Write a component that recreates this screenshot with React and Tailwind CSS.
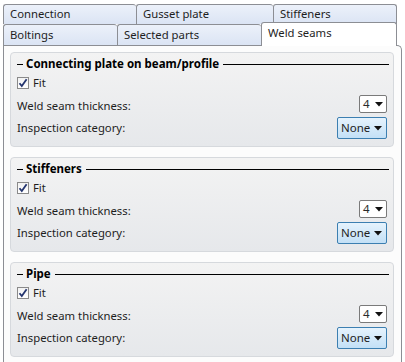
import React from "react";

const font = { fontFamily: "'Noto Sans', 'Open Sans', sans-serif" };

function Tab({ w, label, last, className = "" }) {
  return (
    <div
      className={`h-full flex items-center pl-[6px] border-t border-l border-[#8c8e94] rounded-t-[3px] bg-linear-to-b from-[#ecf1fa] to-[#dbe4f4] text-[11.3px] text-[#1e1e1e] ${last ? "border-r" : ""} ${className}`}
      style={{ width: w }}
    >
      {label}
    </div>
  );
}

function Arrow() {
  return (
    <svg width="8" height="5" viewBox="0 0 8 5" className="shrink-0">
      <path d="M0 0 H8 L4 4.5 Z" fill="#111" />
    </svg>
  );
}

function Check() {
  return (
    <div className="w-[12px] h-[12px] border border-[#8a8a8a] bg-linear-to-b from-[#f2f2f2] to-[#ffffff] flex items-center justify-center">
      <svg width="10" height="10" viewBox="0 0 10 10">
        <path d="M1.5 5.2 L3.8 8 L8.6 1.2" stroke="#24356f" strokeWidth="1.8" fill="none" strokeLinejoin="miter" />
      </svg>
    </div>
  );
}

function Group({ title }) {
  return (
    <div className="w-[384px] h-[95px] rounded-[4px] border border-[#d6d9dd] bg-linear-to-b from-[#f3f3f3] to-[#e6e8eb] pt-[3px] pl-[6px] pr-[6px]">
      <div className="h-[16px] flex items-center">
        <div className="w-[6px] h-[1px] bg-black" />
        <span className="ml-[3px] text-[11.5px] font-bold text-black leading-none">{title}</span>
        <div className="flex-1 h-[1px] bg-black ml-[4px] mr-[-2px]" />
      </div>
      <div className="h-[16px] mt-[3px] flex items-center">
        <Check />
        <span className="ml-[4px] text-[11.3px] text-[#1e1e1e] leading-none">Fit</span>
      </div>
      <div className="h-[18px] mt-[4px] flex items-center justify-between">
        <span className="text-[11.3px] text-[#1e1e1e] leading-none pt-[3px]">Weld seam thickness:</span>
        <div className="w-[28px] h-[18px] border border-[#7a7a7a] rounded-[2px] bg-white flex items-center justify-between pl-[3px] pr-[3px]">
          <span className="text-[11.5px] text-[#2a2a2a] leading-none">4</span>
          <Arrow />
        </div>
      </div>
      <div className="h-[22px] mt-[4px] flex items-center justify-between">
        <span className="text-[11.3px] text-[#1e1e1e] leading-none">Inspection category:</span>
        <div className="w-[50px] h-[22px] border border-[#3c7fb1] rounded-[2px] bg-linear-to-b from-[#e6f3fd] to-[#c3e0f6] flex items-center justify-between pl-[3px] pr-[4px]">
          <span className="text-[11.5px] text-[#1e1e1e] leading-none">None</span>
          <Arrow />
        </div>
      </div>
    </div>
  );
}

export default function App() {
  return (
    <div className="w-[405px] h-[362px] bg-white overflow-hidden" style={font}>
      <div className="pl-[3px] pt-[4px]">
        <div className="flex h-[20px]">
          <Tab w={133} label="Connection" />
          <Tab w={137} label="Gusset plate" />
          <Tab w={124} label="Stiffeners" last />
        </div>
        <div className="flex h-[21px] items-end">
          <Tab w={114} label="Boltings" />
          <Tab w={144} label="Selected parts" />
          <div
            className="relative z-10 w-[136px] h-[24px] -mb-px flex items-center pl-[6px] pb-[2px] border-t border-l border-r border-[#8c8e94] rounded-t-[3px] bg-white text-[11.3px] text-[#1e1e1e]"
          >
            Weld seams
          </div>
        </div>
      </div>
      <div className="ml-[3px] w-[399px] h-[400px] border-t border-l border-r border-[#8c8e94] rounded-tr-[5px] bg-[#fcfcfc] pt-[6px] pl-[6px] flex flex-col gap-[10px]">
        <Group title="Connecting plate on beam/profile" />
        <Group title="Stiffeners" />
        <Group title="Pipe" />
      </div>
    </div>
  );
}
